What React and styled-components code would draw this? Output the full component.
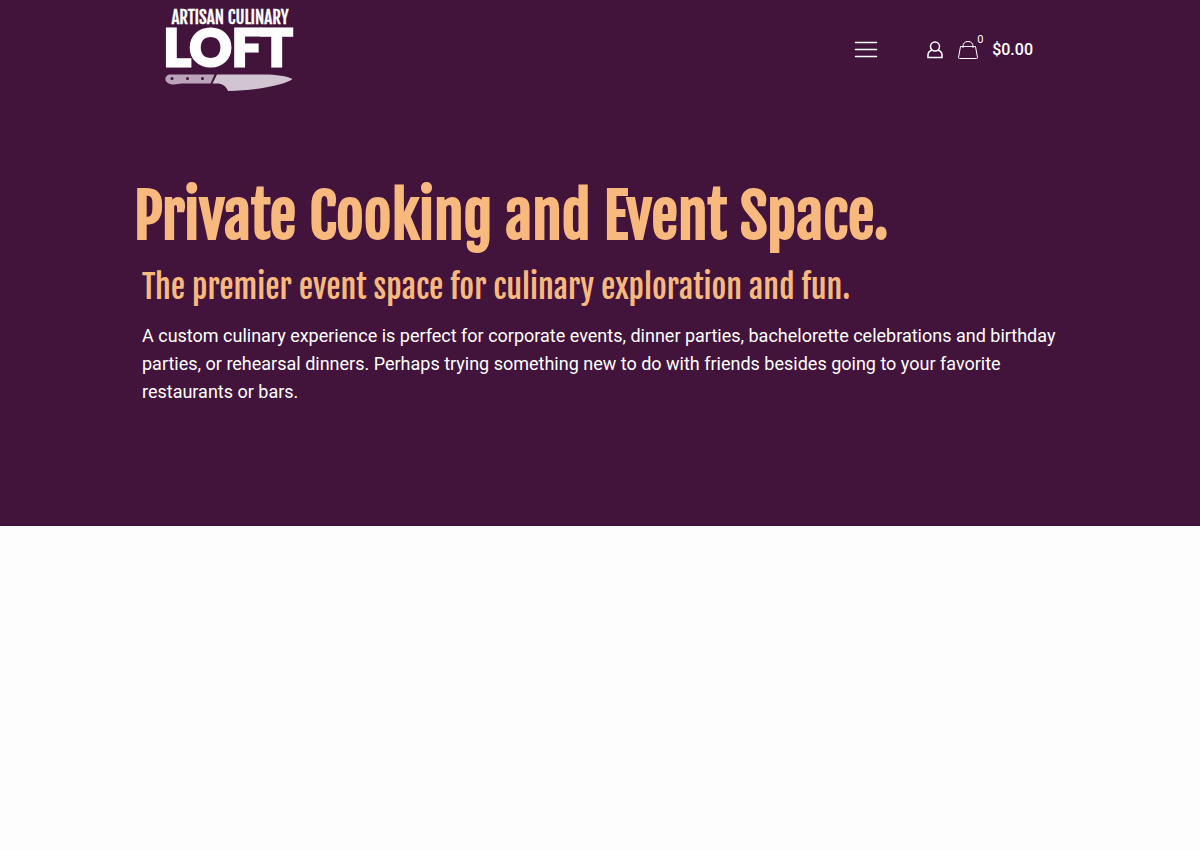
import React from "react";
import styled, { createGlobalStyle } from "styled-components";

const plum = "#42143c";
const peach = "#f7b97e";
const display = '"Fjalla One", "Liberation Sans Narrow", "Roboto Condensed", "Open Sans Condensed", Roboto, sans-serif';

const GlobalStyle = createGlobalStyle`
  *, *::before, *::after { box-sizing: border-box; }
  body {
    margin: 0;
    background: #fdfdfd;
    font-family: Roboto, sans-serif;
    color: #fff;
  }
  a { color: inherit; text-decoration: none; }
`;

const Banner = styled.div`
  background: ${plum};
  padding-bottom: 120px;
`;

const Header = styled.header`
  display: flex;
  align-items: center;
  justify-content: space-between;
  max-width: 870px;
  height: 100px;
  margin: 0 auto;
  padding-right: 2px;
`;

const LogoLink = styled.a`
  display: block;
  line-height: 0;
`;

const Actions = styled.nav`
  display: flex;
  align-items: center;
`;

const MenuButton = styled.button`
  display: flex;
  padding: 0;
  margin-right: 48px;
  border: 0;
  background: none;
  color: inherit;
  cursor: pointer;
`;

const AccountLink = styled.a`
  display: flex;
  margin-right: 14px;
`;

const CartLink = styled.a`
  position: relative;
  display: flex;
  align-items: center;
  gap: 14px;
`;

const CartCount = styled.span`
  position: absolute;
  left: 19px;
  top: -6px;
  font-size: 11px;
  line-height: 12px;
`;

const CartTotal = styled.span`
  font-size: 16px;
  line-height: 20px;
  font-weight: 500;
`;

const Hero = styled.main`
  max-width: 932px;
  margin: 0 auto;
  padding: 76px 0 0;
`;

const Title = styled.h1`
  margin: 0;
  color: ${peach};
  font-family: ${display};
  font-size: 60px;
  line-height: 80px;
  font-weight: 700;
`;

const Copy = styled.div`
  padding: 0 8px;
`;

const Subtitle = styled.h2`
  margin: 8px 0 12px;
  color: ${peach};
  font-family: ${display};
  font-size: 32px;
  line-height: 46px;
  font-weight: 400;
`;

const Text = styled.p`
  margin: 0;
  font-size: 18px;
  line-height: 28px;
`;

const LogoArt = styled.svg`
  overflow: visible;
`;

const LogoSmall = styled.text`
  font-family: ${display};
  font-size: 17px;
  font-weight: 400;
  fill: #fff;
  stroke: #fff;
  stroke-width: 0.3px;
`;

const LogoLarge = styled.text`
  font-family: Lato, sans-serif;
  font-size: 52px;
  font-weight: 900;
  fill: #fff;
  stroke: #fff;
  stroke-width: 3px;
`;

function Logo() {
  return (
    <LogoArt width="130" height="84" viewBox="0 0 130 84" role="img" aria-label="Artisan Culinary Loft">
      <LogoSmall x="65" y="16" textAnchor="middle">ARTISAN CULINARY</LogoSmall>
      <LogoLarge x="63" y="58" textAnchor="middle">LOFT</LogoLarge>
      <path
        d="M5 66.500H49.500L45.500 75.500H17C14 75.500 11.500 76.500 9 76.500C4.500 76.500 1 74.500 0.500 72C0 69 2 66.500 5 66.500Z"
        fill="#bba3ba"
      />
      <path
        d="M52 66.500H98C112 66.500 122 68 127.500 71C121 76 98 82 63 83C61.500 79 58 75.800 53 75.500H47.500Z"
        fill="#d3c4d1"
      />
      <circle cx="7" cy="70.500" r="1.500" fill={plum} />
      <circle cx="22.500" cy="70.500" r="1.500" fill={plum} />
      <circle cx="37.500" cy="70.500" r="1.500" fill={plum} />
    </LogoArt>
  );
}

export default function App() {
  return (
    <>
      <GlobalStyle />
      <Banner>
        <Header>
          <LogoLink href="#home"><Logo /></LogoLink>
          <Actions aria-label="Main">
            <MenuButton type="button" aria-label="Open menu">
              <svg width="24" height="18" viewBox="0 0 24 18" fill="none" stroke="currentColor" strokeWidth="1.500" strokeLinecap="round">
                <path d="M1.500 1.500H22.500M1.500 8.500H22.500M1.500 15.500H22.500" />
              </svg>
            </MenuButton>
            <AccountLink href="#account" aria-label="Account">
              <svg width="18" height="20" viewBox="0 0 18 20" fill="none" stroke="currentColor" strokeWidth="1.500">
                <circle cx="9" cy="6.500" r="4.500" />
                <path d="M6 10.200C3.500 10.800 2 12.500 2 15V17.500H16V15C16 12.500 14.500 10.800 12 10.200" />
              </svg>
            </AccountLink>
            <CartLink href="#cart">
              <svg width="20" height="20" viewBox="0 0 20 20" fill="none" stroke="currentColor" strokeWidth="1" strokeLinejoin="round" aria-hidden="true">
                <path d="M2.500 6.500H17.500L19.500 17.500Q19.500 18.500 18.500 18.500H1.500Q0.500 18.500 0.500 17.500Z" />
                <path d="M5 8V6.500C5 3 7 1.500 10 1.500S15 3 15 6.500V8" />
              </svg>
              <CartCount>0</CartCount>
              <CartTotal>$0.00</CartTotal>
            </CartLink>
          </Actions>
        </Header>
        <Hero>
          <Title>Private Cooking and Event Space.</Title>
          <Copy>
            <Subtitle>The premier event space for culinary exploration and fun.</Subtitle>
            <Text>
              A custom culinary experience is perfect for corporate events, dinner parties, bachelorette
              celebrations and birthday parties, or rehearsal dinners. Perhaps trying something new to do with
              friends besides going to your favorite restaurants or bars.
            </Text>
          </Copy>
        </Hero>
      </Banner>
    </>
  );
}
